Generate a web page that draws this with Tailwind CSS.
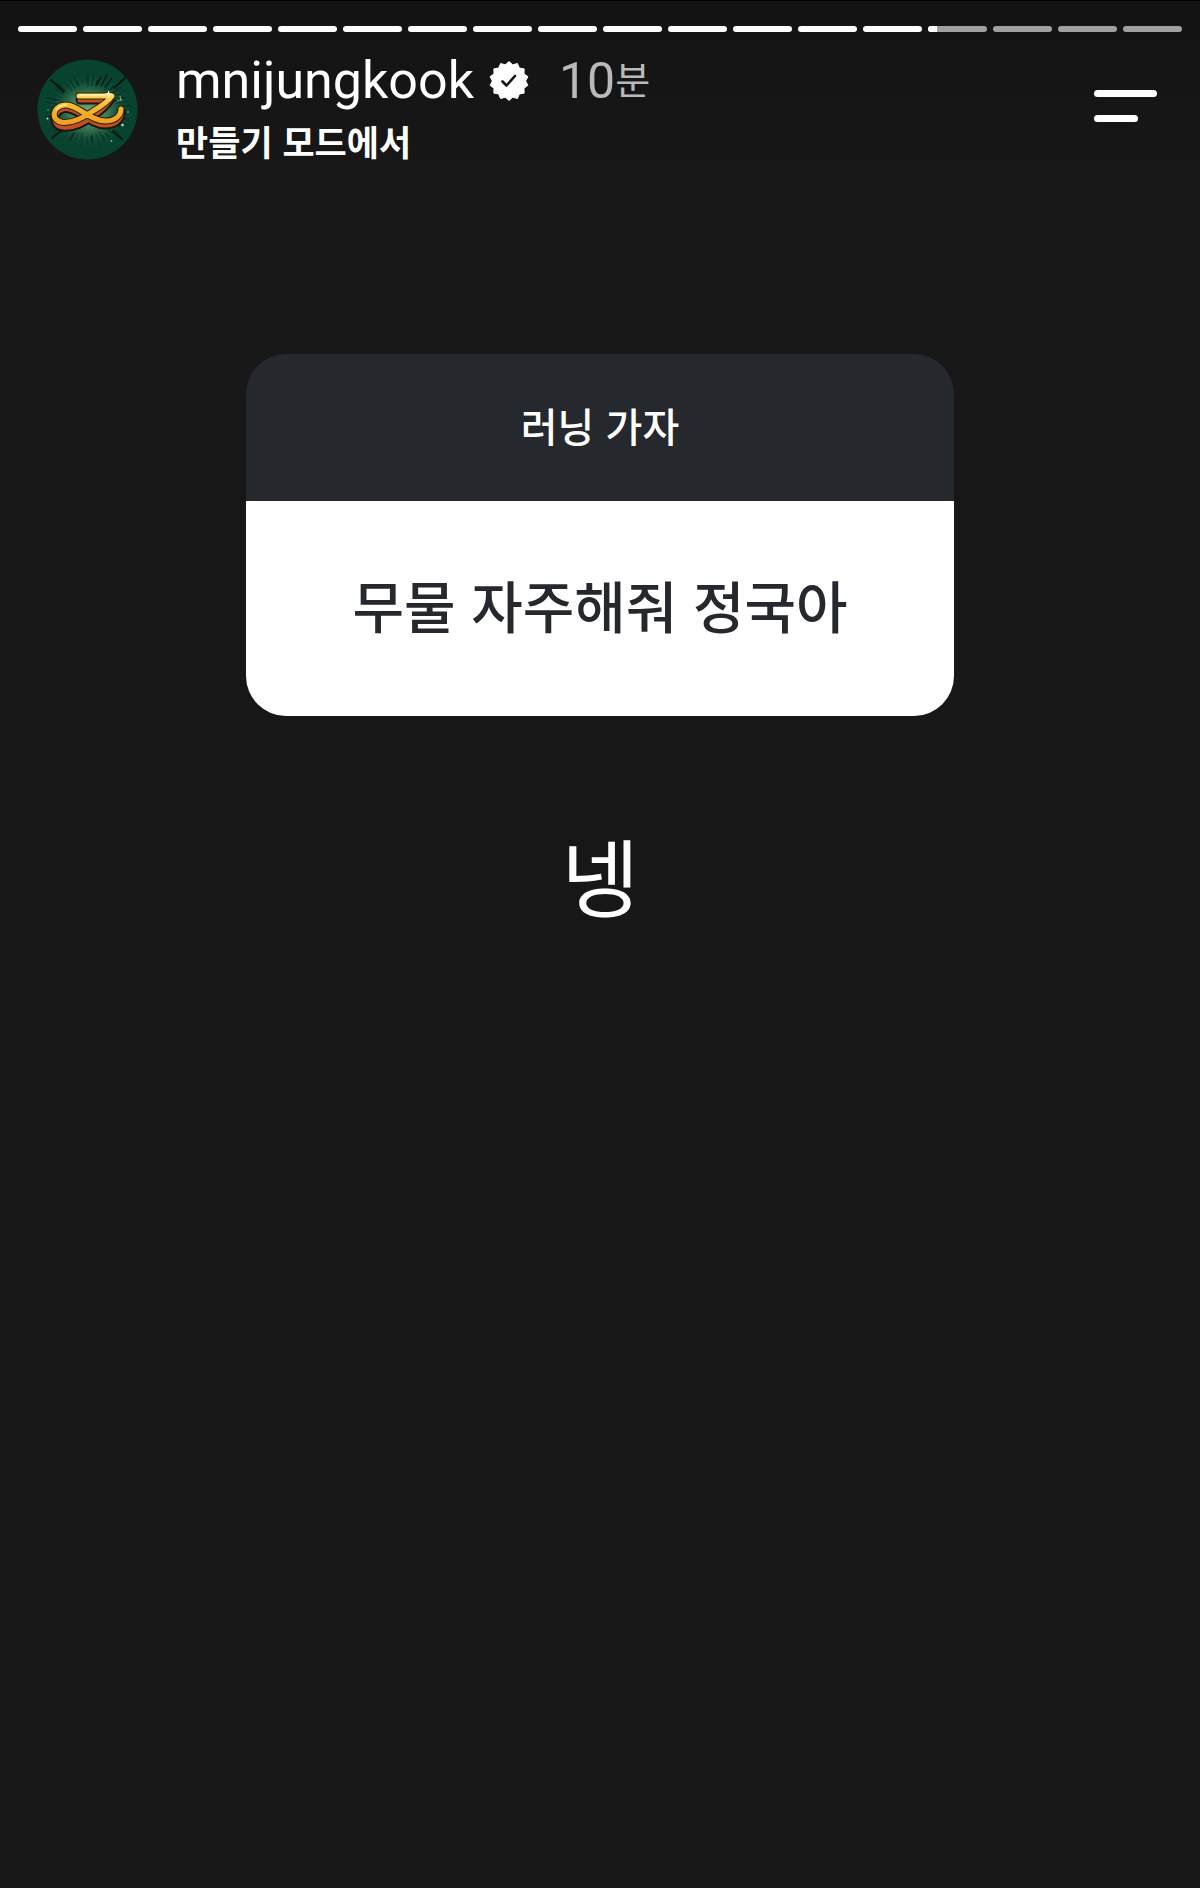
<!DOCTYPE html>
<html lang="ko">
<head>
    <meta charset="UTF-8">
    <meta name="viewport" content="width=device-width, initial-scale=1.0">
    <title>mnijungkook - 스토리</title>
    <script src="https://cdn.jsdelivr.net/npm/@tailwindcss/browser@4"></script>
</head>
<body class="min-h-screen border-t border-black bg-[#171717] text-white font-['Noto_Sans_CJK_KR',sans-serif]">
    <!-- Header -->
    <header class="bg-linear-to-b from-[#131313] to-[#171717] pt-[25px]">
        <!-- Progress -->
        <div id="progress" class="flex gap-[6px] px-[18px]"></div>

        <div class="flex items-start justify-between pt-[21px] pl-[37px] pr-[43px]">
            <div class="flex items-start gap-[38px]">
                <a href="#" aria-label="mnijungkook 프로필" class="mt-[6px] block shrink-0">
                    <svg class="size-[101px]" viewBox="0 0 101 101">
                        <defs>
                            <radialGradient id="glow">
                                <stop offset="0" stop-color="#75a873"/>
                                <stop offset=".45" stop-color="#3d7854"/>
                                <stop offset="1" stop-color="#07432f" stop-opacity="0"/>
                            </radialGradient>
                            <linearGradient id="gold" x1="0" y1="0" x2="0" y2="1">
                                <stop offset="0" stop-color="#ffd95e"/>
                                <stop offset=".4" stop-color="#f6b92d"/>
                                <stop offset="1" stop-color="#f0a020"/>
                            </linearGradient>
                        </defs>
                        <circle cx="50.5" cy="50.5" r="50" fill="#07432f"/>
                        <ellipse cx="51" cy="52" rx="44" ry="38" fill="url(#glow)"/>
                        <g id="rays" stroke="#062a20" stroke-linecap="round"></g>
                        <g stroke="#04150f" stroke-linecap="round">
                            <path d="M14 21 L27 33 M88 19 L77 29 M15 79 L25 71 M85 80 L76 72" stroke-width="1.8"/>
                            <path d="M64 27 L70 16 M68 28 L75 19 M60 26 L64 18" stroke-width="1.2"/>
                        </g>
                        <g fill="none" stroke-linejoin="round">
                            <path d="M43 41 L73 41 Q69 48 56 57 C43 67 33 69 26 68 C14 67 16 51 28 49.500 C40 48 53 66 68 66 C78 66 84 61 84.500 53" stroke="#121a12" stroke-width="9" stroke-linecap="round"/>
                            <path d="M43 41 L73 41 Q69 48 56 57 C43 67 33 69 26 68 C14 67 16 51 28 49.500 C40 48 53 66 68 66 C78 66 84 61 84.500 53" stroke="#c44d22" stroke-width="5" stroke-linecap="round"/>
                            <path d="M42 37 L75 37 Q70 44 56 52 C42 62 33 64 26 63.500 C13 62 15 47 28 46 C40 45 53 62 68 62 C78 62 84 57 84 50" stroke="#20200f" stroke-width="7" stroke-linecap="round"/>
                            <path d="M42 37 L75 37 Q70 44 56 52 C42 62 33 64 26 63.500 C13 62 15 47 28 46 C40 45 53 62 68 62 C78 62 84 57 84 50" stroke="url(#gold)" stroke-width="5" stroke-linecap="round"/>
                            <path d="M43 36 H68 M20 50 Q23 46 29 46" stroke="#fff0a0" stroke-width="1.500" stroke-linecap="round"/>
                        </g>
                        <path d="M71.500 31 L72.500 34 L76 35 L72.500 36 L71.500 39 L70.500 36 L67 35 L70.500 34Z" fill="#fff7cf"/>
                        <g fill="#cfe5cf">
                            <circle cx="10.500" cy="59.500" r="1"/>
                            <circle cx="85.500" cy="66" r="1.200"/>
                            <circle cx="74.500" cy="82" r=".8"/>
                            <circle cx="91" cy="53" r=".7"/>
                            <circle cx="11" cy="51" r=".6"/>
                            <path d="M80 42 l5 -2 M83 37 l1 5" stroke="#a8b885" stroke-width=".8"/>
                        </g>
                    </svg>
                </a>

                <div>
                    <div class="flex h-[56px] items-center">
                        <a href="#" class="font-[Roboto,sans-serif] text-[52px] leading-[56px]">mnijungkook</a>
                        <svg id="badge" class="ml-[15px] size-[40px]" viewBox="0 0 40 40" role="img" aria-label="인증됨">
                            <polygon fill="#fff" stroke="#fff" stroke-width="1" stroke-linejoin="round"/>
                            <path d="M13.500 20.500 L17.500 24.500 L26 15" fill="none" stroke="#151515" stroke-width="2.600" stroke-linecap="round" stroke-linejoin="round"/>
                        </svg>
                        <time class="ml-[30px] flex items-center font-[Roboto,'Noto_Sans_CJK_KR',sans-serif] text-[50px] leading-[56px] text-[#b9b9b9]">10<span class="text-[38px]">분</span></time>
                    </div>
                    <p class="pt-[6px] text-[35px] leading-[52px] font-bold">만들기 모드에서</p>
                </div>
            </div>

            <button type="button" aria-label="메뉴" class="mt-[37px] flex flex-col gap-[18px]">
                <span class="h-[7px] w-[63px] rounded-full bg-white"></span>
                <span class="h-[7px] w-[44px] rounded-full bg-white"></span>
            </button>
        </div>
    </header>

    <!-- Story -->
    <main class="flex flex-col items-center pt-[187px]">
        <section class="w-[59%] overflow-hidden rounded-[40px] text-center">
            <h1 class="bg-[#25282d] pt-[41px] pb-[46px] text-[40px] leading-[60px] font-medium">러닝 가자</h1>
            <p class="bg-white pt-[62px] pb-[72px] text-[56px] leading-[81px] font-medium text-[#25282d]">무물 자주해줘 정국아</p>
        </section>
        <p class="mt-[96px] text-[85px] leading-[124px]">넹</p>
    </main>

    <script>
        const total = 18;
        const current = 14;

        // Progress segments
        const progress = document.getElementById('progress');
        for (let i = 0; i < total; i++) {
            const width = i < current ? 100 : i === current ? 16 : 0;
            progress.innerHTML += `
                <div class="h-[6px] flex-1 overflow-hidden rounded-full bg-[#a0a0a0]">
                    <div class="h-full bg-white" style="width: ${width}%"></div>
                </div>
            `;
        }

        // Verified badge, 14 points
        const points = [];
        for (let i = 0; i < 28; i++) {
            const a = Math.PI * i / 14 - Math.PI / 2;
            const r = i % 2 ? 16.6 : 19.4;
            points.push(`${20 + r * Math.cos(a)},${20 + r * Math.sin(a)}`);
        }
        document.querySelector('#badge polygon').setAttribute('points', points.join(' '));

        // Avatar rays
        let rays = '';
        for (let i = 0; i < 64; i++) {
            const a = Math.PI * i / 32 + (i % 3) * 0.03;
            const inner = 26 + (i * 7) % 6;
            const outer = 33 + (i * 11) % 9;
            const x = Math.cos(a) * 1.1, y = Math.sin(a) * 0.9;
            rays += `<line x1="${51 + x * inner}" y1="${51 + y * inner}" x2="${51 + x * outer}" y2="${51 + y * outer}" stroke-width="${i % 5 === 0 ? 1.2 : 0.7}"/>`;
        }
        document.getElementById('rays').innerHTML = rays;
    </script>
</body>
</html>
